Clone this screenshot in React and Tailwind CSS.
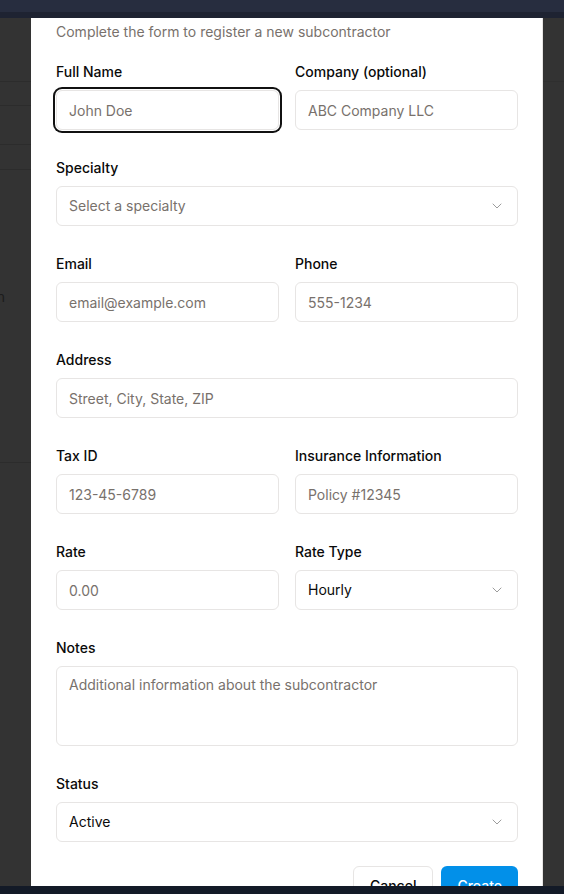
import { ChevronDown } from "lucide-react";

const inputCls =
  "h-10 w-full rounded-md border border-[#e7e5e4] bg-white px-3 text-sm text-[#0a0a0a] placeholder:text-[#78716c] outline-none";

function Field({ label, children }) {
  return (
    <div className="flex flex-col">
      <label className="mb-2 text-sm font-medium leading-5 text-[#0a0a0a]">{label}</label>
      {children}
    </div>
  );
}

function Select({ value, placeholder }) {
  return (
    <div className="flex h-10 w-full items-center justify-between rounded-md border border-[#e7e5e4] bg-white px-3 text-sm">
      <span className={value ? "text-[#0a0a0a]" : "text-[#78716c]"}>{value || placeholder}</span>
      <ChevronDown size={16} strokeWidth={1.5} className="text-[#0a0a0a] opacity-40" />
    </div>
  );
}

export default function App() {
  return (
    <div className="flex h-[894px] w-[564px] flex-col overflow-hidden bg-[#333333] font-['Inter',sans-serif]">
      <div className="h-3 shrink-0 bg-[#272d3f]" />
      <div className="h-[6px] shrink-0 bg-[#1e2332]" />

      <div className="flex min-h-0 flex-1">
        {/* page behind the overlay, left side */}
        <div className="flex w-[31px] shrink-0 flex-col">
          <div className="h-[64px] border-b border-[#2c2c2c]" />
          <div className="h-[24px] border-b border-[#2c2c2c]" />
          <div className="h-[39px] border-b border-[#2c2c2c]" />
          <div className="h-[25px] border-b border-[#2c2c2c]" />
          <div className="flex h-[293px] items-center justify-end overflow-hidden border-b border-[#2c2c2c] pb-[38px]">
            <span className="mr-[26px] text-sm leading-5 text-[#1c1c1c]">n</span>
          </div>
        </div>

        {/* dialog */}
        <div className="w-[512px] shrink-0 overflow-hidden border-r border-[#e7e5e4] bg-white pl-[25px] pr-6 pt-1">
          <p className="mb-5 text-sm leading-5 text-[#78716c]">Complete the form to register a new subcontractor</p>

          <div className="flex flex-col gap-7">
            <div className="grid grid-cols-2 gap-4">
              <Field label="Full Name">
                <input className={inputCls + " ring-2 ring-[#111] ring-offset-1"} placeholder="John Doe" />
              </Field>
              <Field label="Company (optional)">
                <input className={inputCls} placeholder="ABC Company LLC" />
              </Field>
            </div>

            <Field label="Specialty">
              <Select placeholder="Select a specialty" />
            </Field>

            <div className="grid grid-cols-2 gap-4">
              <Field label="Email">
                <input className={inputCls} placeholder="email@example.com" />
              </Field>
              <Field label="Phone">
                <input className={inputCls} placeholder="555-1234" />
              </Field>
            </div>

            <Field label="Address">
              <input className={inputCls} placeholder="Street, City, State, ZIP" />
            </Field>

            <div className="grid grid-cols-2 gap-4">
              <Field label="Tax ID">
                <input className={inputCls} placeholder="123-45-6789" />
              </Field>
              <Field label="Insurance Information">
                <input className={inputCls} placeholder="Policy #12345" />
              </Field>
            </div>

            <div className="grid grid-cols-2 gap-4">
              <Field label="Rate">
                <input className={inputCls} placeholder="0.00" />
              </Field>
              <Field label="Rate Type">
                <Select value="Hourly" />
              </Field>
            </div>

            <Field label="Notes">
              <textarea
                className="h-20 w-full resize-none rounded-md border border-[#e7e5e4] bg-white px-3 py-2 text-sm leading-5 text-[#0a0a0a] placeholder:text-[#78716c] outline-none"
                placeholder="Additional information about the subcontractor"
              />
            </Field>

            <Field label="Status">
              <Select value="Active" />
            </Field>
          </div>

          <div className="mt-6 flex justify-end gap-2">
            <button className="h-10 rounded-md border border-[#e7e5e4] bg-white px-4 text-sm font-medium text-[#0a0a0a]">
              Cancel
            </button>
            <button className="h-10 rounded-md bg-[#0290e9] px-4 text-sm font-medium text-white">Create</button>
          </div>
        </div>

        {/* page behind the overlay, right side */}
        <div className="flex flex-1 flex-col">
          <div className="h-[64px] border-b border-[#2f2f2f]" />
        </div>
      </div>

      <div className="h-2 shrink-0 bg-[#131a27]" />
    </div>
  );
}
